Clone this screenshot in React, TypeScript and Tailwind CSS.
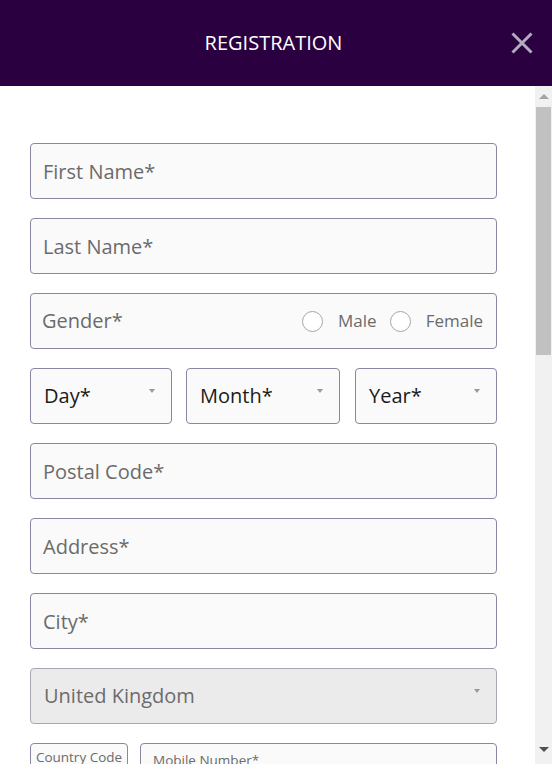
import React from "react";

const font = { fontFamily: '"Open Sans", "Noto Sans", sans-serif' };

function Field({ label }: { label: string }) {
  return (
    <div className="h-[56px] rounded-[4px] border border-[#8c86a3] bg-[#fafafa] flex items-center px-3">
      <span className="text-[20px] text-[#6b6b6b] mt-[1px]">{label}</span>
    </div>
  );
}

function Caret() {
  return <span className="block w-0 h-0 border-l-[3px] border-r-[3px] border-t-[4px] border-l-transparent border-r-transparent border-t-[#999]" />;
}

function SelectBox({ label, className }: { label: string; className: string }) {
  return (
    <div className={`h-[56px] rounded-[4px] border border-[#8c86a3] bg-[#fafafa] flex pl-[13px] pr-[16px] ${className}`}>
      <span className="text-[20px] text-[#1a1a1a] self-center">{label}</span>
      <span className="ml-auto mt-[20px]">
        <Caret />
      </span>
    </div>
  );
}

function Radio({ label }: { label: string }) {
  return (
    <div className="flex items-center gap-[15px]">
      <span className="w-[21px] h-[21px] rounded-full border border-[#a6a6a6] bg-white" />
      <span className="text-[17px] text-[#6b6b6b]">{label}</span>
    </div>
  );
}

export default function App() {
  return (
    <div className="w-[552px] h-[773px] overflow-hidden bg-white flex flex-col" style={font}>
      <header className="h-[86px] shrink-0 bg-[#2b0040] flex items-center justify-center relative">
        <span className="text-white text-[20px] mr-[5px]">REGISTRATION</span>
        <svg className="absolute right-[19px] top-[32px]" width="22" height="22" viewBox="0 0 22 22">
          <path d="M1.5 1.5 L20.5 20.5 M20.5 1.5 L1.5 20.5" stroke="#b3abc0" strokeWidth="3" strokeLinecap="butt" />
        </svg>
      </header>
      <div className="h-[678px] shrink-0 flex">
        <div className="flex-1 overflow-hidden pt-[57px] pl-[30px] pr-[38px]">
          <div className="flex flex-col gap-[19px]">
            <Field label="First Name*" />
            <Field label="Last Name*" />
            <div className="h-[56px] rounded-[4px] border border-[#8c86a3] bg-[#fafafa] flex items-center pl-[11px] pr-[13px]">
              <span className="text-[20px] text-[#6b6b6b]">Gender*</span>
              <div className="ml-auto flex items-center gap-[13px]">
                <Radio label="Male" />
                <Radio label="Female" />
              </div>
            </div>
            <div className="flex">
              <SelectBox label="Day*" className="w-[142px]" />
              <SelectBox label="Month*" className="w-[154px] ml-[14px]" />
              <SelectBox label="Year*" className="w-[142px] ml-auto" />
            </div>
            <Field label="Postal Code*" />
            <Field label="Address*" />
            <Field label="City*" />
            <div className="h-[56px] rounded-[4px] border border-[#a8a8b4] bg-[#ebebeb] flex pl-[13px] pr-[16px]">
              <span className="text-[20px] text-[#6b6b6b] self-center">United Kingdom</span>
              <span className="ml-auto mt-[20px]">
                <Caret />
              </span>
            </div>
            <div className="flex gap-[12px]">
              <div className="w-[98px] h-[56px] rounded-[4px] border border-[#8c86a3] bg-[#fafafa] flex justify-center pt-[3px]">
                <span className="text-[13.5px] text-[#6b6b6b]">Country Code</span>
              </div>
              <div className="flex-1 h-[56px] rounded-[4px] border border-[#8c86a3] bg-[#fafafa] pl-[12px] pt-[3px]">
                <span className="text-[13.5px] text-[#6b6b6b]">Mobile Number*</span>
              </div>
            </div>
          </div>
        </div>
        <div className="w-[17px] shrink-0 bg-[#f1f1f1] flex flex-col items-center">
          <div className="h-[21px] flex items-center justify-center">
            <span className="block w-0 h-0 border-l-[5px] border-r-[5px] border-b-[5px] border-l-transparent border-r-transparent border-b-[#a3a3a3]" />
          </div>
          <div className="w-[15px] h-[248px] bg-[#c1c1c1]" />
          <div className="flex-1" />
          <div className="h-[17px] flex items-start justify-center">
            <span className="block w-0 h-0 border-l-[5px] border-r-[5px] border-t-[5px] border-l-transparent border-r-transparent border-t-[#505050]" />
          </div>
        </div>
      </div>
    </div>
  );
}
